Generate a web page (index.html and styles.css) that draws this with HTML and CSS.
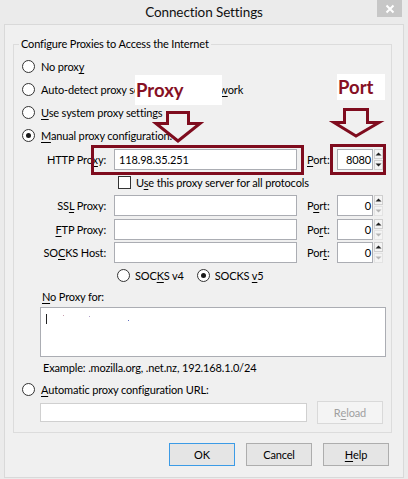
FILE: index.html
```html
<!DOCTYPE html>
<html>
<head>
<meta charset="utf-8">
<title>Connection Settings</title>
<link rel="stylesheet" href="styles.css">
</head>
<body>
<div class="window">
  <div class="titlebar">
    <span class="title">Connection Settings</span>
    <span class="close"><svg width="10" height="10" viewBox="0 0 10 10"><path d="M1.5 1.5L8.5 8.5M8.5 1.5L1.5 8.5" stroke="#fff" stroke-width="2"/></svg></span>
  </div>
  <div class="client">
    <div class="group">
      <span class="legend">Configure Proxies to Access the Internet</span>
      <div class="row r23 radio-row"><span class="radio"></span><span>No prox<u>y</u></span></div>
      <div class="row r23 radio-row"><span class="radio"></span><span>Auto-detect proxy settings for this net<u>w</u>ork</span></div>
      <div class="row r23 radio-row"><span class="radio"></span><span><u>U</u>se system proxy settings</span></div>
      <div class="row r23 radio-row"><span class="radio on"></span><span><u>M</u>anual proxy configuration:</span></div>
      <div class="row r24 field-row">
        <span class="flabel">HTTP Pro<u>x</u>y:</span>
        <span class="input wide">118.98.35.251</span>
        <span class="plabel"><u>P</u>ort:</span>
        <span class="spin"><span class="spin-input">8080</span><span class="spin-btns"><span class="sb up"><svg width="7" height="4" viewBox="0 0 7 4"><path d="M0.5 3.5L3.5 0.5L6.5 3.5Z" fill="#222"/></svg></span><span class="sb dn"><svg width="7" height="4" viewBox="0 0 7 4"><path d="M0.5 0.5L3.5 3.5L6.5 0.5Z" fill="#222"/></svg></span></span></span>
      </div>
      <div class="row r23 check-row"><span class="check"></span><span>U<u>s</u>e this proxy server for all protocols</span></div>
      <div class="row r23 field-row">
        <span class="flabel">SS<u>L</u> Proxy:</span>
        <span class="input wide"></span>
        <span class="plabel">P<u>o</u>rt:</span>
        <span class="spin"><span class="spin-input">0</span><span class="spin-btns"><span class="sb up"><svg width="7" height="4" viewBox="0 0 7 4"><path d="M0.5 3.5L3.5 0.5L6.5 3.5Z" fill="#222"/></svg></span><span class="sb dn off"><svg width="7" height="4" viewBox="0 0 7 4"><path d="M0.5 0.5L3.5 3.5L6.5 0.5Z" fill="#b5b5b5"/></svg></span></span></span>
      </div>
      <div class="row r24 field-row">
        <span class="flabel"><u>F</u>TP Proxy:</span>
        <span class="input wide"></span>
        <span class="plabel">Po<u>r</u>t:</span>
        <span class="spin"><span class="spin-input">0</span><span class="spin-btns"><span class="sb up"><svg width="7" height="4" viewBox="0 0 7 4"><path d="M0.5 3.5L3.5 0.5L6.5 3.5Z" fill="#222"/></svg></span><span class="sb dn off"><svg width="7" height="4" viewBox="0 0 7 4"><path d="M0.5 0.5L3.5 3.5L6.5 0.5Z" fill="#b5b5b5"/></svg></span></span></span>
      </div>
      <div class="row r23 field-row">
        <span class="flabel">SO<u>C</u>KS Host:</span>
        <span class="input wide"></span>
        <span class="plabel">Por<u>t</u>:</span>
        <span class="spin"><span class="spin-input">0</span><span class="spin-btns"><span class="sb up"><svg width="7" height="4" viewBox="0 0 7 4"><path d="M0.5 3.5L3.5 0.5L6.5 3.5Z" fill="#222"/></svg></span><span class="sb dn off"><svg width="7" height="4" viewBox="0 0 7 4"><path d="M0.5 0.5L3.5 3.5L6.5 0.5Z" fill="#b5b5b5"/></svg></span></span></span>
      </div>
      <div class="row r23 socks-row">
        <span class="radio"></span><span class="socks-text">SOC<u>K</u>S v4</span>
        <span class="radio on second"></span><span class="socks-text">SOCKS <u>v</u>5</span>
      </div>
      <div class="row r18 noproxy-label"><span><u>N</u>o Proxy for:</span></div>
      <div class="textarea"><span class="caret"></span><span class="dot d1"></span><span class="dot d2"></span><span class="dot d3"></span></div>
      <div class="row r21 example"><span>Example: .mozilla.org, .net.nz, 192.168.1.0/24</span></div>
      <div class="row r22 radio-row"><span class="radio"></span><span><u>A</u>utomatic proxy configuration URL:</span></div>
      <div class="row r25 url-row">
        <span class="input url"></span>
        <span class="btn reload">R<u>e</u>load</span>
      </div>
    </div>
    <div class="buttons">
      <span class="btn default">OK</span>
      <span class="btn">Cancel</span>
      <span class="btn"><u>H</u>elp</span>
    </div>
  </div>

  <div class="tag tag-proxy">Proxy</div>
  <div class="tag tag-port">Port</div>
  <svg class="marks" width="408" height="479" viewBox="0 0 408 479">
    <rect x="92.5" y="146.5" width="210" height="27" fill="none" stroke="#7f0c1e" stroke-width="3"/>
    <rect x="331.5" y="145.5" width="53" height="28" fill="none" stroke="#7f0c1e" stroke-width="3"/>
    <path d="M167.5 112.5H188.5V123.5H200L178 141L156 123.5H167.5Z" fill="#f0f0f0" stroke="#7f0c1e" stroke-width="3" stroke-linejoin="miter"/>
    <path d="M344.5 109.5H367.5V122.5H379L356 136L334 122.5H344.5Z" fill="#f0f0f0" stroke="#7f0c1e" stroke-width="3" stroke-linejoin="miter"/>
  </svg>
</div>
</body>
</html>
```

FILE: styles.css
```css
* { box-sizing: border-box; }
body {
  margin: 0;
  background: #ebebeb;
  font-family: Lato, "Open Sans", sans-serif;
  font-size: 11px;
  letter-spacing: -0.15px;
  color: #000;
}
u { text-decoration-thickness: 1px; text-underline-offset: 2px; }
.window {
  position: relative;
  width: 408px;
  height: 479px;
  background: #ebebeb;
  overflow: hidden;
}
.titlebar {
  height: 24px;
  display: grid;
  grid-template-columns: 1fr auto 1fr;
  align-items: start;
}
.title {
  grid-column: 2;
  font-size: 13.5px;
  letter-spacing: -0.1px;
  line-height: 24px;
  color: #111;
}
.close {
  grid-column: 3;
  justify-self: end;
  margin-right: 6px;
  width: 25px;
  height: 17px;
  background: #c7c7c7;
  display: flex;
  align-items: center;
  justify-content: center;
}
.client {
  margin: 0 4px;
  height: 454px;
  border: 1px solid #d9d9d9;
  background: #f0f0f0;
}
.group {
  position: relative;
  margin: 19px 0 0 8px;
  width: 379px;
  height: 389px;
  border: 1px solid #dcdcdc;
  padding-top: 10px;
}
.legend {
  position: absolute;
  top: -9px;
  left: 5px;
  padding: 0 2px;
  line-height: 16px;
  background: #f0f0f0;
}
.row { display: flex; align-items: center; }
.r18 { height: 18px; }
.r21 { height: 21px; }
.r22 { height: 22px; }
.r23 { height: 23px; }
.r24 { height: 24px; }
.r25 { height: 25px; }

.radio {
  flex: none;
  width: 13px;
  height: 13px;
  border: 1px solid #333;
  border-radius: 50%;
  background: #fff;
  display: flex;
  align-items: center;
  justify-content: center;
}
.radio.on::after {
  content: "";
  width: 5px;
  height: 5px;
  border-radius: 50%;
  background: #1a1a1a;
}
.radio-row { padding-left: 8px; gap: 6px; }

.check {
  flex: none;
  width: 13px;
  height: 13px;
  border: 1px solid #333;
  background: #fff;
}
.check-row { padding-left: 104px; gap: 5px; }

.field-row { padding-left: 0; }
.flabel { width: 92px; text-align: right; margin-right: 8px; }
.input {
  display: flex;
  align-items: center;
  height: 21px;
  border: 1px solid #abadb3;
  background: #fff;
  padding-left: 4px;
}
.wide { width: 183px; }
.plabel { width: 30px; margin-left: 10px; }
.spin { display: flex; align-items: center; }
.spin-input {
  width: 36px;
  height: 21px;
  border: 1px solid #abadb3;
  background: #fff;
  text-align: right;
  padding-right: 1px;
  line-height: 19px;
}
.spin-btns {
  display: flex;
  flex-direction: column;
  gap: 1px;
  margin-left: 1px;
}
.sb {
  width: 9px;
  height: 10px;
  display: flex;
  align-items: center;
  justify-content: center;
  border: 1px solid #cfcfcf;
  background: #f4f4f4;
}
.sb.off { border-color: #e3e3e3; }

.socks-row { padding-left: 103px; }
.socks-text { margin-left: 5px; }
.radio.second { margin-left: 13px; }

.noproxy-label { padding-left: 28px; }
.textarea {
  margin: 2px 0 0 26px;
  width: 346px;
  height: 50px;
  border: 1px solid #abadb3;
  background: #fff;
  position: relative;
}
.caret {
  position: absolute;
  left: 5px;
  top: 6px;
  width: 1px;
  height: 10px;
  background: #222;
}
.dot { position: absolute; width: 1px; height: 1px; }
.d1 { left: 22px; top: 7px; background: #c9a0b0; }
.d2 { left: 48px; top: 8px; background: #b0a0c9; }
.d3 { left: 87px; top: 12px; background: #6070c0; }

.example { padding-left: 29px; }
.url-row { padding-left: 26px; }
.url { width: 267px; height: 19px; border-color: #d0d0d0; }
.btn {
  display: flex;
  align-items: center;
  justify-content: center;
  width: 66px;
  height: 23px;
  border: 1px solid #adadad;
  background: #e5e5e5;
}
.reload {
  margin-left: 10px;
  background: #f4f4f4;
  border-color: #d9d9d9;
  color: #a0a0a0;
}
.buttons {
  display: flex;
  justify-content: flex-end;
  gap: 11px;
  margin-top: 10px;
  padding-right: 14px;
}
.btn.default { border-color: #3c9be6; }

.tag {
  position: absolute;
  background: #fff;
  color: #861024;
  font-family: Lato, "Open Sans", sans-serif;
  font-weight: 700;
  font-size: 18.5px;
  letter-spacing: 0;
  line-height: 26px;
}
.tag-proxy { left: 135px; top: 75px; width: 87px; height: 30px; padding: 2px 0 0 1px; }
.tag-port { left: 337px; top: 74px; width: 48px; height: 26px; padding: 0 0 0 1px; }
.marks { position: absolute; left: 0; top: 0; pointer-events: none; }
```
